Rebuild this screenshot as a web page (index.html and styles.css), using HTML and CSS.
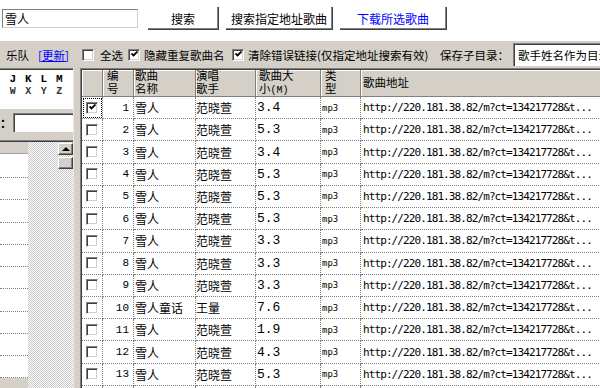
FILE: index.html
```html
<!DOCTYPE html>
<html lang="zh-CN">
<head>
<meta charset="utf-8">
<title>歌曲搜索下载</title>
<link rel="stylesheet" href="styles.css">
</head>
<body>
<div class="top">
  <div class="search">雪人</div>
  <div class="btn b1">搜索</div>
  <div class="btn b2">搜索指定地址歌曲</div>
  <div class="btn b3">下载所选歌曲</div>
</div>
<div class="toolbar">
  <span>乐队</span>
  <a class="link">[更新]</a>
  <span class="cb"></span>
  <span>全选</span>
  <span class="cb"><svg class="tick" viewBox="0 0 7 7"><path d="M0.5 2.5 L2.5 4.5 L6.5 0.5"/></svg></span>
  <span>隐藏重复歌曲名</span>
  <span class="cb"><svg class="tick" viewBox="0 0 7 7"><path d="M0.5 2.5 L2.5 4.5 L6.5 0.5"/></svg></span>
  <span>清除错误链接(仅指定地址搜索有效)</span>
  <span>保存子目录：</span>
  <div class="combo">歌手姓名作为目录</div>
</div>
<div class="main">
  <div class="side">
    <div class="letters">
      <span>J</span><span>K</span><span>L</span><span>M</span>
      <span class="lo">W</span><span class="lo">X</span><span class="lo">Y</span><span class="lo">Z</span>
    </div>
    <div class="namerow"><span class="colon">：</span><div class="field"></div></div>
    <div class="list">
      <div class="lcol">
        <div class="lhead"></div>
        <div class="lrow first"></div>
        <div class="lrow"></div><div class="lrow"></div><div class="lrow"></div>
        <div class="lrow"></div><div class="lrow"></div><div class="lrow"></div>
        <div class="lrow"></div><div class="lrow"></div><div class="lrow"></div>
      </div>
      <div class="lfill">
        <div class="sbtn"><span class="arrow"></span></div>
        <div class="sbtn thumb"></div>
      </div>
    </div>
  </div>
  <div class="tablewrap">
    <div class="grid">
      <div class="h k1"></div>
      <div class="h k2"><span>编<br>号</span></div>
      <div class="h k3"><span>歌曲<br>名称</span></div>
      <div class="h k4"><span>演唱<br>歌手</span></div>
      <div class="h k5"><span>歌曲大<br>小<small>(M)</small></span></div>
      <div class="h k6"><span>类<br>型</span></div>
      <div class="h k7"><span>歌曲地址</span></div>

      <div class="c k1 focus"><span class="cb"><svg class="tick" viewBox="0 0 7 7"><path d="M0.5 2.5 L2.5 4.5 L6.5 0.5"/></svg></span></div>
      <div class="c k2">1</div><div class="c k3">雪人</div><div class="c k4">范晓萱</div><div class="c k5">3.4</div><div class="c k6">mp3</div><div class="c k7">http://220.181.38.82/m?ct=134217728&amp;t...</div>

      <div class="c k1"><span class="cb"></span></div>
      <div class="c k2">2</div><div class="c k3">雪人</div><div class="c k4">范晓萱</div><div class="c k5">5.3</div><div class="c k6">mp3</div><div class="c k7">http://220.181.38.82/m?ct=134217728&amp;t...</div>

      <div class="c k1"><span class="cb"></span></div>
      <div class="c k2">3</div><div class="c k3">雪人</div><div class="c k4">范晓萱</div><div class="c k5">3.4</div><div class="c k6">mp3</div><div class="c k7">http://220.181.38.82/m?ct=134217728&amp;t...</div>

      <div class="c k1"><span class="cb"></span></div>
      <div class="c k2">4</div><div class="c k3">雪人</div><div class="c k4">范晓萱</div><div class="c k5">5.3</div><div class="c k6">mp3</div><div class="c k7">http://220.181.38.82/m?ct=134217728&amp;t...</div>

      <div class="c k1"><span class="cb"></span></div>
      <div class="c k2">5</div><div class="c k3">雪人</div><div class="c k4">范晓萱</div><div class="c k5">5.3</div><div class="c k6">mp3</div><div class="c k7">http://220.181.38.82/m?ct=134217728&amp;t...</div>

      <div class="c k1"><span class="cb"></span></div>
      <div class="c k2">6</div><div class="c k3">雪人</div><div class="c k4">范晓萱</div><div class="c k5">5.3</div><div class="c k6">mp3</div><div class="c k7">http://220.181.38.82/m?ct=134217728&amp;t...</div>

      <div class="c k1"><span class="cb"></span></div>
      <div class="c k2">7</div><div class="c k3">雪人</div><div class="c k4">范晓萱</div><div class="c k5">3.3</div><div class="c k6">mp3</div><div class="c k7">http://220.181.38.82/m?ct=134217728&amp;t...</div>

      <div class="c k1"><span class="cb"></span></div>
      <div class="c k2">8</div><div class="c k3">雪人</div><div class="c k4">范晓萱</div><div class="c k5">3.3</div><div class="c k6">mp3</div><div class="c k7">http://220.181.38.82/m?ct=134217728&amp;t...</div>

      <div class="c k1"><span class="cb"></span></div>
      <div class="c k2">9</div><div class="c k3">雪人</div><div class="c k4">范晓萱</div><div class="c k5">3.3</div><div class="c k6">mp3</div><div class="c k7">http://220.181.38.82/m?ct=134217728&amp;t...</div>

      <div class="c k1"><span class="cb"></span></div>
      <div class="c k2">10</div><div class="c k3">雪人童话</div><div class="c k4">王量</div><div class="c k5">7.6</div><div class="c k6">mp3</div><div class="c k7">http://220.181.38.82/m?ct=134217728&amp;t...</div>

      <div class="c k1"><span class="cb"></span></div>
      <div class="c k2">11</div><div class="c k3">雪人</div><div class="c k4">范晓萱</div><div class="c k5">1.9</div><div class="c k6">mp3</div><div class="c k7">http://220.181.38.82/m?ct=134217728&amp;t...</div>

      <div class="c k1"><span class="cb"></span></div>
      <div class="c k2">12</div><div class="c k3">雪人</div><div class="c k4">范晓萱</div><div class="c k5">4.3</div><div class="c k6">mp3</div><div class="c k7">http://220.181.38.82/m?ct=134217728&amp;t...</div>

      <div class="c k1"><span class="cb"></span></div>
      <div class="c k2">13</div><div class="c k3">雪人</div><div class="c k4">范晓萱</div><div class="c k5">5.3</div><div class="c k6">mp3</div><div class="c k7">http://220.181.38.82/m?ct=134217728&amp;t...</div>

      <div class="c k1"></div><div class="c k2"></div><div class="c k3"></div><div class="c k4"></div><div class="c k5"></div><div class="c k6"></div><div class="c k7"></div>
    </div>
  </div>
</div>
</body>
</html>
```

FILE: styles.css
```css
* { box-sizing: border-box; margin: 0; padding: 0; }
html, body { width: 600px; height: 388px; overflow: hidden; }
body {
  background: #fff;
  color: #000;
  font-family: "Noto Sans CJK SC", sans-serif;
  font-size: 12px;
}

/* top area */
.top {
  height: 41px;
  display: flex;
  align-items: flex-start;
  padding-top: 7px;
  background: #fff;
}
.search {
  margin: 2px 0 0 2px;
  width: 136px;
  height: 19px;
  border: 1px solid;
  border-color: #808080 #d4d0c8 #d4d0c8 #808080;
  background: #fff;
  padding-left: 2px;
  line-height: 17px;
  font-size: 12px;
}
.btn {
  height: 23px;
  display: flex;
  align-items: center;
  justify-content: center;
  background: #fff;
  border-right: 1px solid #404040;
  border-bottom: 1px solid #404040;
  box-shadow: inset -1px -1px #808080;
  font-size: 12px;
}
.b1 { margin-left: 10px; width: 71px; }
.b2 { margin-left: 7px; width: 107px; }
.b3 { margin-left: 7px; width: 107px; color: #0000ff; }

/* toolbar */
.toolbar {
  height: 27px;
  background: #d4d0c8;
  display: grid;
  grid-template-columns: 32px 44px 18px 28px 16px 88px 16px 192px 73px 1fr;
  align-items: center;
  padding-left: 6px;
  font-size: 11.5px;
  white-space: nowrap;
  overflow: hidden;
}
.link { color: #0000ff; text-decoration: underline; }
.combo {
  height: 23px;
  background: #fff;
  border-top: 1px solid #808080;
  border-left: 1px solid #808080;
  box-shadow: inset 1px 1px #404040;
  padding: 1px 0 0 4px;
  line-height: 20px;
  font-size: 11.5px;
  overflow: hidden;
  white-space: nowrap;
}

/* checkbox */
.cb {
  width: 12px;
  height: 12px;
  background: #fff;
  border: 1px solid;
  border-color: #808080 #fff #fff #808080;
  box-shadow: inset 1px 1px #404040, inset -1px -1px #d4d0c8;
  display: flex;
  align-items: center;
  justify-content: center;
}
.tick {
  width: 7px;
  height: 7px;
  fill: none;
  stroke: #000;
  stroke-width: 1.8;
}

/* main */
.main {
  display: flex;
  gap: 6px;
  height: 320px;
  background: #d4d0c8;
}
.side {
  width: 74px;
  display: flex;
  flex-direction: column;
  border-right: 1px solid #e8e8e8;
}
.letters {
  height: 41px;
  background: #fff;
  border-top: 1px solid #808080;
  box-shadow: inset 0 1px #404040;
  display: grid;
  grid-template-columns: repeat(4, 15.5px);
  grid-auto-rows: 13px;
  justify-items: center;
  align-items: center;
  padding: 3px 0 0 5px;
  font-family: "Liberation Mono", monospace;
  font-weight: bold;
  font-size: 11px;
}
.letters .lo { font-size: 10px; color: #333; }
.namerow {
  height: 31px;
  display: flex;
  align-items: flex-start;
  padding-top: 4px;
}
.colon {
  width: 13px;
  font-weight: bold;
  line-height: 19px;
  font-size: 12px;
}
.field {
  flex: 1;
  height: 19px;
  background: #fff;
  border-top: 1px solid #808080;
  border-left: 1px solid #808080;
  box-shadow: inset 1px 1px #404040;
}
.list {
  flex: 1;
  display: flex;
  border-top: 1px solid #808080;
  box-shadow: inset 0 1px #404040;
  padding-top: 1px;
  overflow: hidden;
}
.lcol { width: 28px; display: flex; flex-direction: column; }
.lhead {
  height: 12px;
  flex: none;
  background: #d4d0c8;
  border-bottom: 1px solid #a0a0a0;
}
.lrow {
  height: 22.25px;
  flex: none;
  background: #fff;
  border-bottom: 1px dotted #808080;
}
.lrow.first { height: 24px; }
.lfill {
  flex: 1;
  display: flex;
  flex-direction: column;
  align-items: flex-end;
  gap: 2px;
  padding-top: 1px;
  background: repeating-conic-gradient(#fff 0 25%, #c8c8c8 0 50%) 0 0 / 2px 2px;
}
.sbtn {
  width: 15px;
  height: 12px;
  background: #d4d0c8;
  border: 1px solid;
  border-color: #fff #404040 #404040 #fff;
  box-shadow: inset -1px -1px #808080;
  display: flex;
  align-items: center;
  justify-content: center;
}
.arrow {
  width: 0;
  height: 0;
  border-left: 4px solid transparent;
  border-right: 4px solid transparent;
  border-bottom: 4px solid #000;
}

/* table */
.tablewrap {
  flex: 1;
  background: #fff;
  border-top: 1px solid #808080;
  border-left: 1px solid #808080;
  box-shadow: inset 1px 1px #404040;
  padding: 1px 0 0 1px;
  overflow: hidden;
}
.grid {
  display: grid;
  grid-template-columns: 21px 31px 62px 60px 65px 40px 300px;
  grid-template-rows: 27px;
  grid-auto-rows: 22.23px;
  width: 579px;
}
.h {
  background: #d4d0c8;
  border-right: 1px solid #808080;
  border-bottom: 1px solid #808080;
  box-shadow: inset 1px 1px #fff;
  display: flex;
  align-items: center;
  font-family: "Liberation Sans", "Noto Sans CJK SC", sans-serif;
  line-height: 13px;
  font-size: 11.5px;
  white-space: nowrap;
}
.h small { font-family: "Liberation Mono", monospace; font-size: 10px; }
.c {
  border-right: 1px dotted #808080;
  border-bottom: 1px dotted #808080;
  display: flex;
  align-items: center;
  white-space: nowrap;
  overflow: hidden;
  font-size: 12px;
}
.c.k1 { justify-content: center; }
.focus { outline: 1px dotted #000; outline-offset: -2px; }
.h.k2 { padding-left: 4px; }
.h.k3 { padding-left: 1px; }
.h.k5 { padding-left: 3px; }
.h.k6 { padding-left: 4px; }
.h.k7 { padding-left: 2px; }
.c.k2 {
  justify-content: flex-end;
  padding-right: 4px;
  font-family: "Liberation Mono", monospace;
  font-size: 11px;
}
.c.k3 { padding-left: 1px; }
.c.k5 {
  padding-left: 1px;
  font-family: "Liberation Mono", monospace;
  font-size: 13px;
}
.c.k6 {
  padding-left: 1px;
  font-family: "DejaVu Sans Mono", monospace;
  font-size: 9px;
}
.c.k7 {
  padding-left: 2px;
  font-family: "DejaVu Sans Mono", monospace;
  font-size: 11px;
  letter-spacing: -0.9px;
}
```
